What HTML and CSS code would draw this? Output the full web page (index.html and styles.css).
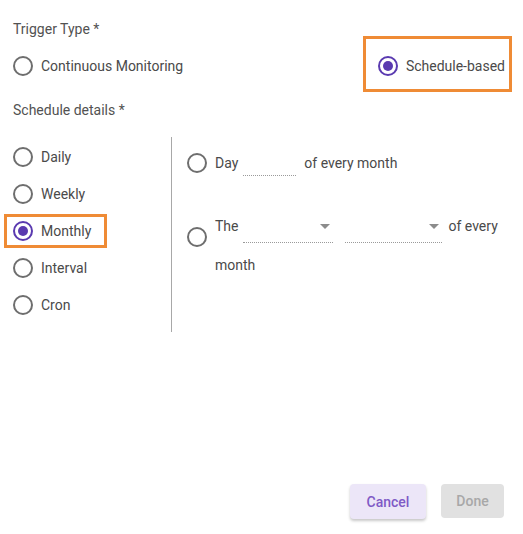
FILE: index.html
```html
<!DOCTYPE html>
<html>
<head>
<meta charset="utf-8">
<link rel="stylesheet" href="styles.css">
</head>
<body>
<div class="dialog">
  <div class="label">Trigger Type *</div>
  <div class="trigger-row">
    <div class="option continuous"><span class="radio"></span><span>Continuous Monitoring</span></div>
    <div class="option schedule-box"><span class="radio checked"></span><span>Schedule-based</span></div>
  </div>
  <div class="label details">Schedule details *</div>
  <div class="columns">
    <div class="left-col">
      <div class="option"><span class="radio"></span><span>Daily</span></div>
      <div class="option"><span class="radio"></span><span>Weekly</span></div>
      <div class="option highlight"><span class="radio checked"></span><span>Monthly</span></div>
      <div class="option"><span class="radio"></span><span>Interval</span></div>
      <div class="option"><span class="radio"></span><span>Cron</span></div>
    </div>
    <div class="right-col">
      <div class="day-row">
        <span class="radio"></span><span class="txt">Day</span><span class="field"></span><span class="txt after">of every month</span>
      </div>
      <div class="the-row">
        <span class="radio the-radio"></span>
        <div class="the-text"><span class="the-word">The</span><span class="select s1"><span class="arrow"></span></span><span class="select s2"><span class="arrow"></span></span><span class="tail">of every month</span></div>
      </div>
    </div>
  </div>
  <div class="actions">
    <button class="btn cancel">Cancel</button>
    <button class="btn done">Done</button>
  </div>
</div>
</body>
</html>
```

FILE: styles.css
```css
html, body {
  margin: 0;
  padding: 0;
  background: #ffffff;
}
body {
  font-family: Roboto, "Liberation Sans", Arial, sans-serif;
  font-size: 14px;
  color: #4a4a4a;
}
.dialog {
  width: 523px;
  height: 534px;
  box-sizing: border-box;
  padding-top: 19px;
}
.label {
  line-height: 20px;
  padding-left: 13px;
  color: #525252;
}
.label.details {
  margin-top: 11px;
}
.trigger-row {
  display: flex;
  justify-content: space-between;
  align-items: center;
  padding-right: 14px;
}
.option {
  display: flex;
  align-items: center;
  gap: 8px;
  line-height: 20px;
  width: fit-content;
  box-sizing: border-box;
}
.continuous {
  margin-top: 4px;
  padding-left: 13px;
}
.schedule-box {
  height: 50px;
  outline: 3px solid #ef8b35;
  padding: 17px 4px 13px 12px;
  align-items: flex-start;
}
.radio {
  width: 20px;
  height: 20px;
  box-sizing: border-box;
  border: 2px solid #6e6e6e;
  border-radius: 50%;
  flex: none;
  display: inline-flex;
  align-items: center;
  justify-content: center;
}
.radio.checked {
  border-color: #5a3ab0;
}
.radio.checked::after {
  content: "";
  width: 10px;
  height: 10px;
  border-radius: 50%;
  background: #5a3ab0;
}
.columns {
  display: flex;
  margin-top: 17px;
}
.left-col {
  width: 172px;
  height: 195px;
  border-right: 1px solid #a8a8a8;
  padding-top: 6px;
  box-sizing: border-box;
  display: flex;
  flex-direction: column;
  gap: 9px;
}
.left-col .option {
  height: 28px;
  margin-left: 7px;
  padding: 0 13px 0 6px;
}
.left-col .option.highlight {
  outline: 3px solid #ef8b35;
}
.right-col {
  padding-left: 15px;
  padding-top: 12px;
  flex: 1;
}
.day-row {
  display: flex;
  align-items: center;
  height: 28px;
}
.day-row .txt {
  margin-left: 8px;
  line-height: 20px;
}
.day-row .field {
  width: 53px;
  height: 24px;
  margin-left: 5px;
  position: relative;
  top: 1px;
  border-bottom: 1px dotted #9a9a9a;
  box-sizing: border-box;
}
.day-row .txt.after {
  margin-left: 8px;
}
.the-row {
  display: flex;
  align-items: flex-start;
  margin-top: 30px;
}
.the-radio {
  margin-top: 20px;
}
.the-text {
  margin-left: 8px;
  width: 292px;
  line-height: 39px;
}
.select {
  display: inline-flex;
  justify-content: flex-end;
  align-items: center;
  vertical-align: top;
  height: 36px;
  box-sizing: border-box;
  padding-top: 4px;
  padding-right: 3px;
  border-bottom: 1px dotted #9a9a9a;
}
.s1 {
  width: 90px;
  margin-left: 4px;
}
.s2 {
  width: 97px;
  margin-left: 12px;
}
.arrow {
  width: 0;
  height: 0;
  border-left: 5px solid transparent;
  border-right: 5px solid transparent;
  border-top: 5px solid #8c8c8c;
}
.tail {
  margin-left: 7px;
}
.actions {
  display: flex;
  justify-content: flex-end;
  gap: 15px;
  padding-right: 19px;
  margin-top: 152px;
}
.btn {
  font-family: Roboto, "Liberation Sans", Arial, sans-serif;
  font-size: 14px;
  font-weight: 500;
  height: 35px;
  border: none;
  border-radius: 4px;
  padding: 0;
}
.cancel {
  width: 76px;
  background: #ece6f8;
  color: #7f5ac6;
  box-shadow: 0 2px 3px rgba(0, 0, 0, 0.22);
}
.done {
  width: 63px;
  height: 34px;
  background: #e1e1e1;
  color: #a8a8a8;
}
```
